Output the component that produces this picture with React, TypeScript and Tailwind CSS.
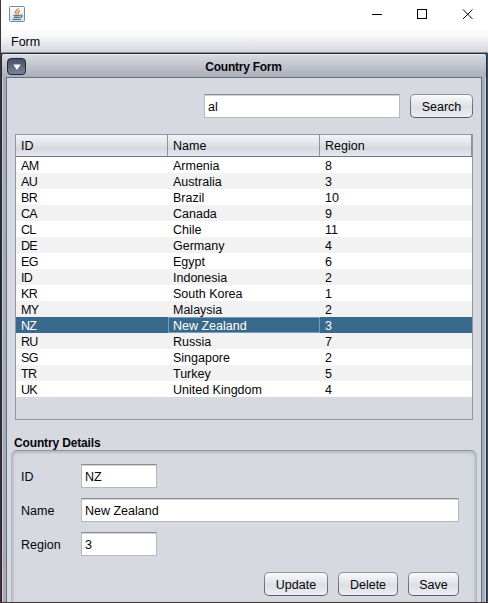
import React from 'react';

const countries: [string, string, string][] = [
  ['AM', 'Armenia', '8'],
  ['AU', 'Australia', '3'],
  ['BR', 'Brazil', '10'],
  ['CA', 'Canada', '9'],
  ['CL', 'Chile', '11'],
  ['DE', 'Germany', '4'],
  ['EG', 'Egypt', '6'],
  ['ID', 'Indonesia', '2'],
  ['KR', 'South Korea', '1'],
  ['MY', 'Malaysia', '2'],
  ['NZ', 'New Zealand', '3'],
  ['RU', 'Russia', '7'],
  ['SG', 'Singapore', '2'],
  ['TR', 'Turkey', '5'],
  ['UK', 'United Kingdom', '4'],
];

function Button({ children, className }: { children: string; className: string }) {
  return (
    <button
      className={`h-6 rounded-[5px] bg-linear-to-b from-[#8f939a] to-[#565b63] p-px ${className}`}
    >
      <span className="flex h-full items-center justify-center rounded-[4px] bg-linear-to-b from-[#fafafb] via-[#dcdfe4] via-55% to-[#eceff4] pt-px">
        {children}
      </span>
    </button>
  );
}

function Field({ value, className }: { value: string; className: string }) {
  return (
    <div
      className={`flex h-6 items-center border border-[#b6b8bc] border-t-[#8c8d91] bg-white pt-px pl-[3px] shadow-[inset_0_1px_0_#d2d3d6] ${className}`}
    >
      {value}
    </div>
  );
}

function Row({ label, value, className }: { label: string; value: string; className: string }) {
  return (
    <div className="flex h-6 items-center">
      <span className="w-[60px] pt-px">{label}</span>
      <Field value={value} className={className} />
    </div>
  );
}

function JavaIcon() {
  return (
    <svg width="16" height="16" viewBox="0 0 16 16" fill="none">
      <defs>
        <linearGradient id="tile" x1="0" y1="0" x2="0" y2="1">
          <stop stopColor="#fdfdfd" />
          <stop offset="1" stopColor="#d7e1e8" />
        </linearGradient>
      </defs>
      <rect x=".5" y=".5" width="15" height="15" rx="1" fill="url(#tile)" stroke="#6f8b9e" />
      <path d="M9.2 2.2c.5 1.7-3.8 2.5-2.7 4.5.3.6.9.9.9 1.9M10.9 4.8c-2 .8-2.5 1.6-1.6 2.5.3.4 0 .9-.4 1.2" stroke="#ed7d24" strokeWidth="1.4" />
      <path d="M4.3 9.6h6.7M5 11.3h5.4M3.5 13.3h8.4M11.2 9.1c2.6-.4 2.4 2-.1 2.4" stroke="#4d7490" strokeWidth="1.3" />
    </svg>
  );
}

function TitleBar() {
  return (
    <header className="flex h-[30px] items-start justify-between bg-white pt-[6px] pr-[14px] pl-2">
      <JavaIcon />
      <svg width="102" height="16" viewBox="0 0 102 16" fill="none" stroke="#000" shapeRendering="crispEdges">
        <path d="M0 8.5h10" />
        <rect x="45.5" y="3.5" width="9" height="9" />
        <path d="M91 3.5l9.5 9.5M100.5 3.5L91 13" shapeRendering="auto" />
      </svg>
    </header>
  );
}

export default function App() {
  return (
    <div className="h-[603px] w-[488px] overflow-hidden bg-[#49353b] font-['Liberation_Sans',Arial,sans-serif] text-[12.5px] leading-4 text-[#050509]">
      <div className="flex h-[602px] bg-linear-to-b from-[#4b3039] via-[#222730] to-[#5b2930] pl-px">
        <div className="flex w-[487px] flex-col bg-[#33516b]">
          <TitleBar />
          <nav className="h-[23px] border-b border-[#8d929d] bg-linear-to-b from-[#fbfbfc] from-20% to-[#d4d7dd] pt-1 pl-[10px]">
            Form
          </nav>
          <main className="flex h-[549px] w-[486px] flex-col rounded-t-[3px] border border-b-0 border-[#232a36] bg-[#a6abb6]">
            <div className="grid h-[24px] shrink-0 grid-cols-[60px_1fr_65px] items-center rounded-t-[2px] border-t border-[#eceef0] bg-linear-to-b from-[#d7d9df] to-[#a9adb7] pl-[5px]">
              <button className="flex h-[17px] w-[19px] items-center justify-center rounded-[4px] border border-[#20293a] bg-linear-to-b from-[#465166] to-[#79859a]">
                <svg width="8" height="6" viewBox="0 0 8 6">
                  <path d="M.3.5h7.4L4 6z" fill="#fff" />
                </svg>
              </button>
              <h1 className="pt-px pr-px text-center text-xs font-bold tracking-[-0.25px]">Country Form</h1>
            </div>
            <div className="-mt-px flex min-h-0 flex-1 border-r border-l border-r-[#d3d6dc] border-l-[#c8ccd4] pr-[3px] pl-[3px]">
              <section className="flex w-[476px] flex-col border border-b-0 border-[#686f7e] bg-[#d6d9e0]">
                <div className="mt-4 flex justify-end gap-[10px] pr-2">
                  <Field value="al" className="w-[196px]" />
                  <Button className="w-[63px]">Search</Button>
                </div>

                <div className="mt-4 ml-2 h-[286px] w-[458px] shrink-0 border border-[#9297a1]">
                  <div className="grid h-[22px] grid-cols-[152px_152px_152px] border-b border-[#747b88] bg-linear-to-b from-[#f3f4f6] via-[#d7d9df] via-65% to-[#e3e8f2]">
                    {['ID', 'Name', 'Region'].map((title) => (
                      <span key={title} className="border-r border-[#8c919b] pt-[3px] pl-[5px]">
                        {title}
                      </span>
                    ))}
                  </div>
                  {countries.map(([id, name, region], index) => {
                    const selected = id === 'NZ';
                    const fill = selected
                      ? 'bg-[#39698a] text-white'
                      : index % 2
                        ? 'bg-[#f2f2f2]'
                        : 'bg-white';
                    return (
                      <div key={id} className={`grid h-4 grid-cols-[152px_152px_152px] leading-[18px] ${fill}`}>
                        <span className="pl-[5px] tracking-[-0.7px]">{id}</span>
                        <span
                          className={
                            selected
                              ? 'h-4 border border-[#729cc4] pl-[4px] leading-4'
                              : 'pl-[5px]'
                          }
                        >
                          {name}
                        </span>
                        <span className="pl-[5px]">{region}</span>
                      </div>
                    );
                  })}
                </div>

                <h2 className="mt-[15px] ml-[7px] h-[15px] shrink-0 text-xs leading-4 font-bold tracking-[-0.15px]">
                  Country Details
                </h2>
                <div className="ml-1 flex min-h-0 w-[466px] flex-1 flex-col rounded-t-[6px] border border-b-0 border-[#b0b4bc] border-t-[#92959d] px-[9px] pt-[13px] shadow-[inset_0_2px_3px_#b6bac3,inset_2px_0_2px_#c4c8d0,inset_-2px_0_2px_#c4c8d0]">
                  <div className="flex flex-col gap-[10px]">
                    <Row label="ID" value="NZ" className="w-[76px]" />
                    <Row label="Name" value="New Zealand" className="w-[378px]" />
                    <Row label="Region" value="3" className="w-[76px]" />
                  </div>
                  <div className="mt-4 flex justify-end gap-[10px] pr-2">
                    <Button className="w-[64px]">Update</Button>
                    <Button className="w-[60px]">Delete</Button>
                    <Button className="w-[51px]">Save</Button>
                  </div>
                </div>
              </section>
            </div>
          </main>
        </div>
      </div>
    </div>
  );
}
